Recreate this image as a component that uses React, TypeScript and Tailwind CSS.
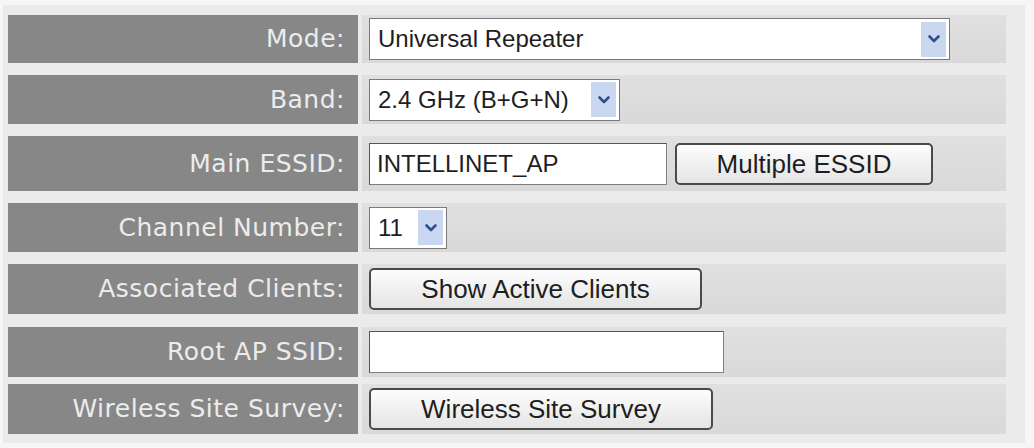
import React from "react";

const labelFont = { fontFamily: '"DejaVu Sans", Verdana, sans-serif' };
const fieldFont = { fontFamily: '"Liberation Sans", Arial, sans-serif' };

function Arrow() {
  return (
    <span className="flex h-[35px] w-[25px] items-center justify-center bg-[#c9d8f0]">
      <svg width="14" height="10" viewBox="0 0 14 10">
        <path d="M2.5 2.5 L7 7 L11.5 2.5" fill="none" stroke="#2f4f8f" strokeWidth="2.6" strokeLinecap="round" strokeLinejoin="round" />
      </svg>
    </span>
  );
}

function Select({ value, width }: { value: string; width: string }) {
  return (
    <div className={`flex h-[42px] items-center justify-between border border-[#7a7a7a] bg-white pl-[8px] pr-[3px] text-[24px] text-[#1e1e1e] ${width}`} style={fieldFont}>
      <span className="leading-none">{value}</span>
      <Arrow />
    </div>
  );
}

function TextBox({ value, width }: { value: string; width: string }) {
  return (
    <div className={`flex h-[42px] items-center border border-[#808080] border-t-[#555] border-l-[#555] bg-white pl-[7px] text-[24px] text-[#1e1e1e] ${width}`} style={fieldFont}>
      <span className="leading-none">{value}</span>
    </div>
  );
}

function Button({ label, width }: { label: string; width: string }) {
  return (
    <button className={`flex h-[42px] items-center justify-center rounded-[5px] border-2 border-[#4a4a4a] bg-gradient-to-b from-[#fdfdfd] to-[#e4e4e4] text-[26px] text-[#1e1e1e] ${width}`} style={fieldFont}>
      <span className="leading-none">{label}</span>
    </button>
  );
}

function Row({ label, rowClass, children }: { label: string; rowClass: string; children: React.ReactNode }) {
  return (
    <div className={`flex gap-[4px] ${rowClass}`}>
      <div className="flex w-[350px] items-center justify-end bg-[#878787] pr-[13px] text-[25px] tracking-[0.5px] text-[#ececec]" style={labelFont}>
        {label}:
      </div>
      <div className="flex flex-1 items-center gap-[8px] bg-gradient-to-b from-[#e0e0e0] to-[#d9d9d9] pl-[7px]">{children}</div>
    </div>
  );
}

export default function App() {
  return (
    <div className="h-[448px] w-[1034px] bg-[#f6f6f6] pt-[5px] pl-[3px]">
      <div className="flex h-[438px] w-[1022px] flex-col bg-[#ebebeb] pl-[5px] pr-[19px] pt-[10px]">
        <Row label="Mode" rowClass="h-[48px]">
          <Select value="Universal Repeater" width="w-[581px]" />
        </Row>
        <Row label="Band" rowClass="mt-[12px] h-[49px]">
          <Select value="2.4 GHz (B+G+N)" width="w-[251px]" />
        </Row>
        <Row label="Main ESSID" rowClass="mt-[12px] h-[55px]">
          <TextBox value="INTELLINET_AP" width="w-[298px]" />
          <Button label="Multiple ESSID" width="w-[258px]" />
        </Row>
        <Row label="Channel Number" rowClass="mt-[12px] h-[49px]">
          <Select value="11" width="w-[78px]" />
        </Row>
        <Row label="Associated Clients" rowClass="mt-[12px] h-[50px]">
          <Button label="Show Active Clients" width="w-[333px]" />
        </Row>
        <Row label="Root AP SSID" rowClass="mt-[13px] h-[50px]">
          <TextBox value="" width="w-[355px]" />
        </Row>
        <Row label="Wireless Site Survey" rowClass="mt-[7px] h-[50px]">
          <Button label="Wireless Site Survey" width="w-[344px]" />
        </Row>
      </div>
    </div>
  );
}
